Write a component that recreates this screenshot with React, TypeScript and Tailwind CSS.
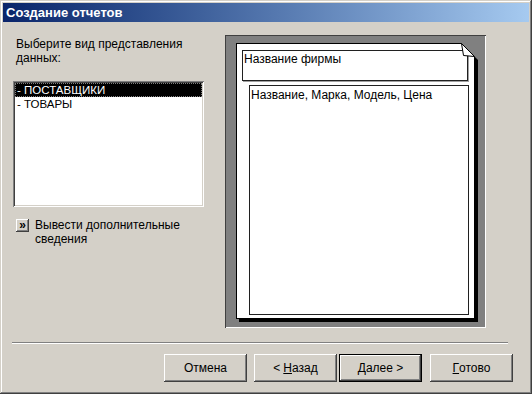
import React from "react";

const raised =
  "shadow-[inset_-1px_-1px_#404040,inset_1px_1px_#ffffff,inset_-2px_-2px_#808080,inset_2px_2px_#d4d0c8]";

function Btn({ children, def }: { children: React.ReactNode; def?: boolean }) {
  return (
    <div
      className={
        "w-[83px] h-[28px] flex items-center justify-center bg-[#d4d0c8] text-black " +
        (def
          ? "border border-black shadow-[inset_-1px_-1px_#404040,inset_1px_1px_#ffffff,inset_-2px_-2px_#808080]"
          : raised)
      }
    >
      {children}
    </div>
  );
}

export default function App() {
  return (
    <div className="w-[532px] h-[394px] bg-[#d4d0c8] flex flex-col font-['Liberation_Sans',Arial,sans-serif] text-[12px] text-black shadow-[inset_-1px_-1px_#404040,inset_1px_1px_#d4d0c8,inset_-2px_-2px_#808080,inset_2px_2px_#ffffff] overflow-hidden">
      {/* Title bar */}
      <div className="mx-[3px] mt-[3px] h-[19px] bg-gradient-to-r from-[#0a246a] to-[#a6caf0] flex items-center pl-[3px] text-white font-bold text-[13px] leading-none">
        Создание отчетов
      </div>

      {/* Main */}
      <div className="flex">
        {/* Left column */}
        <div className="ml-[13px] w-[191px] flex flex-col">
          <div className="mt-[15px] ml-[3px] leading-[14px] text-[12px]">
            Выберите вид представления
            <br />
            данных:
          </div>
          <div className="mt-[16px] h-[126px] bg-white p-[2px] shadow-[inset_1px_1px_#808080,inset_-1px_-1px_#ffffff,inset_2px_2px_#404040,inset_-2px_-2px_#d4d0c8] text-[11.5px]">
            <div className="h-[14px] leading-[14px] bg-black text-white pl-[2px] outline outline-1 outline-dotted outline-[#808080] -outline-offset-1">
              - ПОСТАВЩИКИ
            </div>
            <div className="h-[14px] leading-[14px] pl-[2px]">- ТОВАРЫ</div>
          </div>
          <div className="mt-[11px] ml-[3px] flex items-start">
            <div
              className={
                "w-[13px] h-[13px] mt-[1px] flex items-center justify-center text-[12px] font-bold leading-none pb-[2px] " +
                raised
              }
            >
              »
            </div>
            <div className="ml-[6px] leading-[14px] text-[12px]">
              Вывести дополнительные
              <br />
              сведения
            </div>
          </div>
        </div>

        {/* Preview panel */}
        <div className="ml-[21px] mt-[13px] w-[261px] h-[293px] bg-[#808080] shadow-[inset_1px_1px_#404040,inset_-1px_-1px_#ffffff] pl-[11px] pt-[8px]">
          <div className="relative w-[239px] h-[276px] bg-white border border-black shadow-[3px_3px_0_#000] flex flex-col">
            <div className="ml-[5px] mt-[6px] w-[226px] h-[31px] border border-[#202020] shadow-[1px_1px_0_#a0a0a0] pl-[1px] pt-[1px] leading-[14px] text-[12px]">
              Название фирмы
            </div>
            <div className="ml-[12px] mt-[4px] w-[220px] h-[230px] border border-[#202020] pl-[1px] pt-[2px] leading-[14px] text-[12px]">
              Название, Марка, Модель, Цена
            </div>
            <svg
              className="absolute top-[-1px] right-[-5px]"
              width="19"
              height="19"
              viewBox="0 0 19 19"
            >
              <polygon points="1,0 19,0 19,18 15,18 15,14" fill="#808080" />
              <polygon points="15,14 18,17 18,19 15,19" fill="#000" />
              <polygon
                points="1.5,0.5 14.5,13.5 3.5,12.5"
                fill="#fff"
                stroke="#000"
                strokeWidth="1"
                strokeLinejoin="round"
              />
            </svg>
          </div>
        </div>
      </div>

      {/* Separator */}
      <div className="ml-[12px] w-[496px] mt-[14px] border-t border-t-[#808080] border-b border-b-white" />

      {/* Buttons */}
      <div className="flex mt-[10px] ml-[164px]">
        <Btn>Отмена</Btn>
        <div className="ml-[7px]">
          <Btn>
            &lt; <span className="underline ml-[3px]">Н</span>азад
          </Btn>
        </div>
        <div className="ml-[2px]">
          <Btn def>
            <span className="underline">Д</span>алее &gt;
          </Btn>
        </div>
        <div className="ml-[8px]">
          <Btn>
            <span className="underline">Г</span>отово
          </Btn>
        </div>
      </div>
    </div>
  );
}
